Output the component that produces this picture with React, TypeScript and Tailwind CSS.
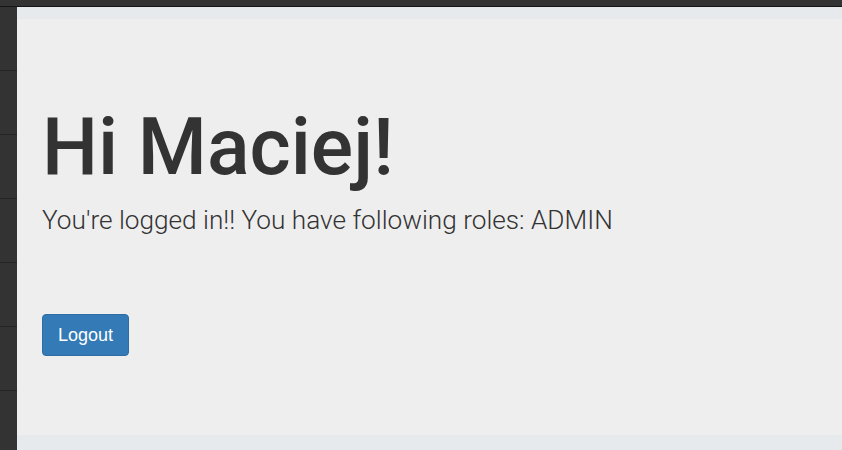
export default function App() {
  const slots = [0, 1, 2, 3, 4, 5, 6];

  return (
    <div className="flex flex-col w-[842px] h-[450px] overflow-hidden bg-[#333333]">
      {/* top strip */}
      <div className="h-[6px] bg-[#333333] shrink-0" />
      <div className="h-px bg-[#151515] shrink-0" />

      <div className="flex flex-1 min-h-0">
        {/* narrow dark sidebar */}
        <div className="w-[17px] shrink-0 flex flex-col bg-[#333333]">
          {slots.map((i) => (
            <div key={i} className="h-[64px] shrink-0 border-b border-[#232323]" />
          ))}
        </div>

        <main className="flex-1 flex flex-col bg-[#eeeeee]">
          <div className="h-[12px] bg-[#e7eaed] shrink-0" />

          <div className="flex-1 px-[25px] pt-[80px]">
            <h1
              className="text-[79px] leading-[96px] font-medium text-[#333333]"
              style={{ fontFamily: "Roboto, sans-serif" }}
            >
              Hi Maciej!
            </h1>
            <p
              className="mt-[7px] text-[26.2px] leading-[36px] font-light text-[#333333]"
              style={{ fontFamily: "Roboto, sans-serif" }}
            >
              You're logged in!! You have following roles: ADMIN
            </p>

            <button
              className="mt-[76px] h-[42px] px-[15px] rounded-[4px] bg-[#337ab7] border border-[#2e6da4] text-white text-[18px]"
              style={{ fontFamily: "'Liberation Sans', Arial, sans-serif" }}
            >
              Logout
            </button>
          </div>

          <div className="h-[15px] bg-[#e7eaed] shrink-0" />
        </main>
      </div>
    </div>
  );
}
